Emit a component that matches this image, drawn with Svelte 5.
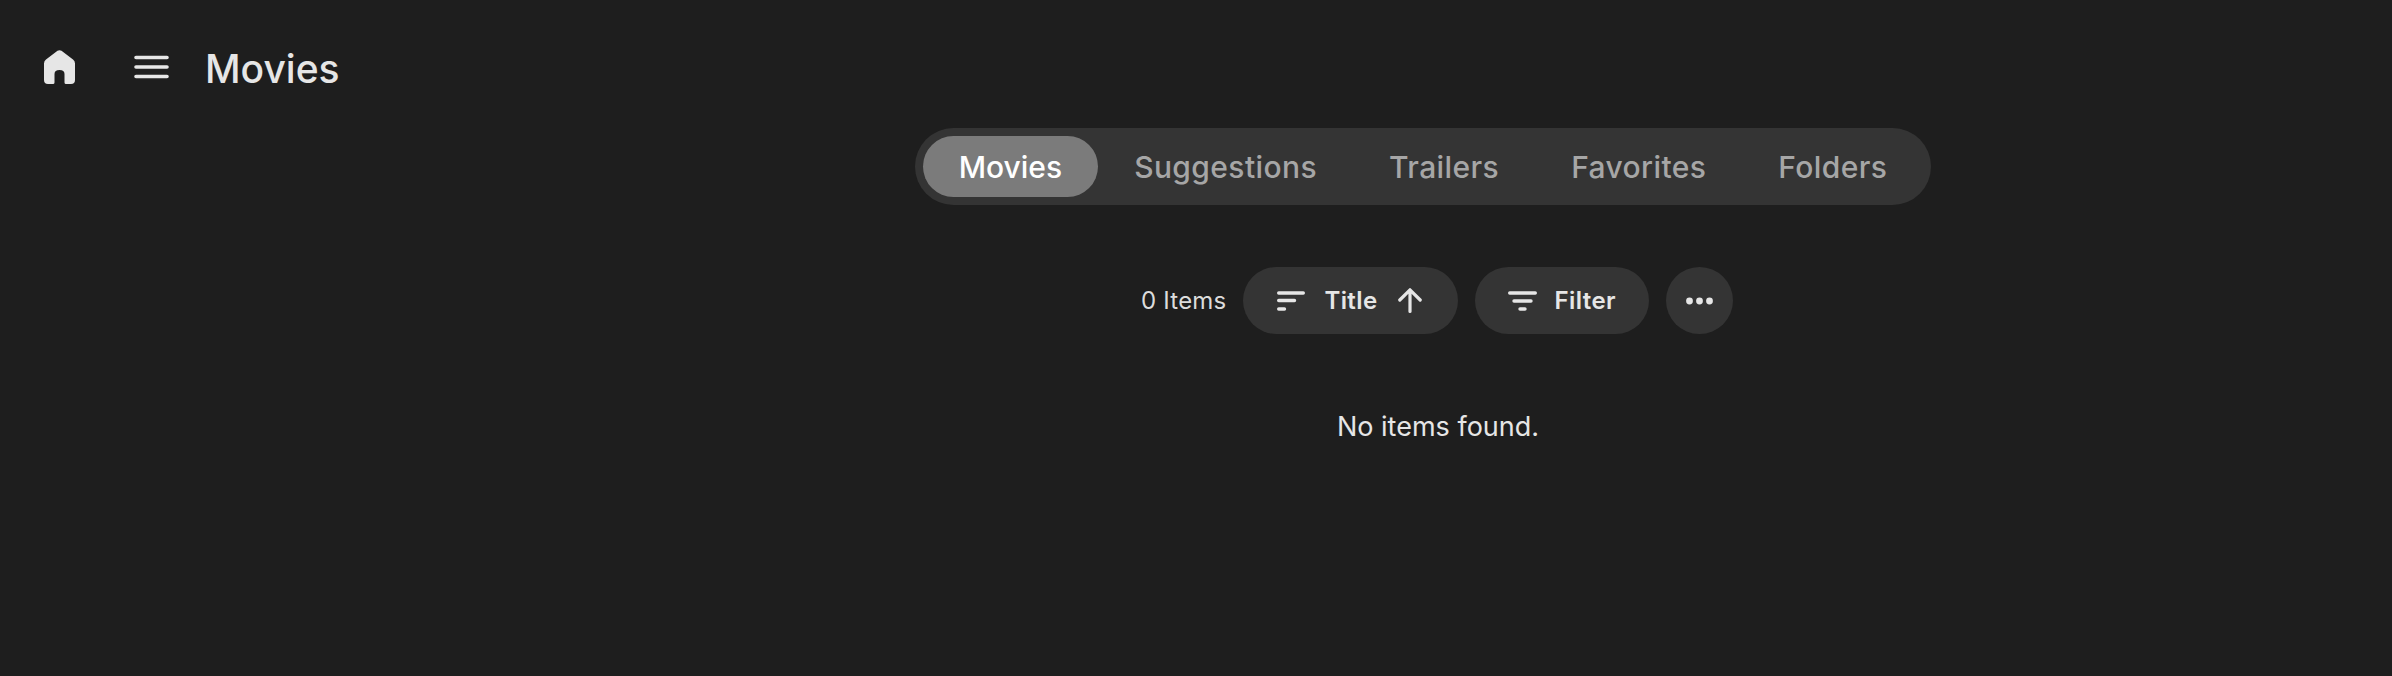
<script>
  const tabs = ['Movies', 'Suggestions', 'Trailers', 'Favorites', 'Folders'];
  let active = $state(0);
</script>

<div class="page">
  <header class="topbar">
    <button class="icon-btn home" aria-label="Home">
      <svg width="31" height="34" viewBox="0 0 31 34">
        <path fill="#e6e6e6" d="M13.5 .8Q15.5 -.4 17.5 .8L29 9.5Q31 11 31 13.5V30Q31 34 27 34H22Q20.5 34 20.5 32.5V24Q20.5 20 15.5 20Q10.5 20 10.5 24V32.5Q10.5 34 9 34H4Q0 34 0 30V13.5Q0 11 2 9.5Z"/>
      </svg>
    </button>
    <button class="icon-btn menu" aria-label="Menu">
      <svg width="35" height="24" viewBox="0 0 35 24" fill="none" stroke="#e6e6e6" stroke-width="3.6" stroke-linecap="round">
        <path d="M2 2.5H33M2 12H33M2 21.5H33"/>
      </svg>
    </button>
    <h1>Movies</h1>
  </header>

  <main class="content">
    <nav class="tabs">
      {#each tabs as tab, i}
        <button class="tab" class:active={i === active} onclick={() => (active = i)}>{tab}</button>
      {/each}
    </nav>

    <div class="toolbar">
      <span class="count">0 Items</span>
      <button class="pill sort">
        <svg width="28" height="20" viewBox="0 0 28 20" fill="none" stroke="#e6e6e6" stroke-width="3.4" stroke-linecap="round">
          <path d="M1.7 2H26.3M1.7 9.5H17.5M1.7 18H7.5"/>
        </svg>
        <span>Title</span>
        <svg width="24" height="25" viewBox="0 0 24 25" fill="none" stroke="#e6e6e6" stroke-width="3.2" stroke-linecap="round" stroke-linejoin="round">
          <path d="M12 23.4V1.8M1.8 12L12 1.8L22.2 12"/>
        </svg>
      </button>
      <button class="pill filter">
        <svg width="29" height="20" viewBox="0 0 29 20" fill="none" stroke="#e6e6e6" stroke-width="3.4" stroke-linecap="round">
          <path d="M1.7 2H27.3M6 10H23M12 18H17"/>
        </svg>
        <span>Filter</span>
      </button>
      <button class="pill more" aria-label="More">
        <svg width="27" height="8" viewBox="0 0 27 8" fill="#e6e6e6">
          <circle cx="3.5" cy="4" r="3.4"/>
          <circle cx="13.5" cy="4" r="3.4"/>
          <circle cx="23.5" cy="4" r="3.4"/>
        </svg>
      </button>
    </div>

    <p class="empty">No items found.</p>
  </main>
</div>

<style>
  :global(body) {
    margin: 0;
    background: #1e1e1e;
  }

  .page {
    min-height: 676px;
    background: #1e1e1e;
    color: #e6e6e6;
    font-family: Inter, "Liberation Sans", sans-serif;
  }

  button {
    font: inherit;
    color: inherit;
    border: none;
    background: none;
    padding: 0;
    cursor: pointer;
  }

  .topbar {
    box-sizing: border-box;
    height: 128px;
    padding: 6px 0 0 44px;
    display: flex;
    align-items: center;
  }

  .icon-btn {
    display: flex;
  }

  .menu {
    margin-left: 59px;
  }

  h1 {
    margin: 2px 0 0 36px;
    font-size: 39px;
    font-weight: 500;
    color: #e6e6e6;
  }

  .content {
    margin-left: 484px;
    display: flex;
    flex-direction: column;
    align-items: center;
  }

  .tabs {
    display: flex;
    padding: 8px;
    height: 61px;
    margin-right: 30px;
    background: #343434;
    border-radius: 39px;
  }

  .tab {
    padding: 0 36px;
    border-radius: 31px;
    font-size: 30px;
    font-weight: 500;
    letter-spacing: 0.4px;
    color: #a6a6a6;
  }

  .tab.active {
    background: #7b7b7b;
    color: #fff;
    letter-spacing: 0;
  }

  .toolbar {
    display: flex;
    align-items: center;
    gap: 17px;
    margin: 62px 2px 0 0;
  }

  .count {
    font-size: 24px;
    letter-spacing: 0.2px;
    color: #dcdcdc;
  }

  .pill {
    height: 67px;
    display: flex;
    align-items: center;
    background: #343434;
    border-radius: 34px;
    font-size: 24px;
    font-weight: 600;
    letter-spacing: 0.4px;
    color: #e6e6e6;
  }

  .sort {
    padding: 0 36px 0 34px;
    gap: 19px;
  }

  .sort span {
    margin-right: 1px;
  }

  .filter {
    padding: 0 33px;
    gap: 18px;
  }

  .more {
    width: 67px;
    justify-content: center;
  }

  .empty {
    margin: 76px 0 0;
    font-size: 27px;
    color: #e6e6e6;
  }
</style>
